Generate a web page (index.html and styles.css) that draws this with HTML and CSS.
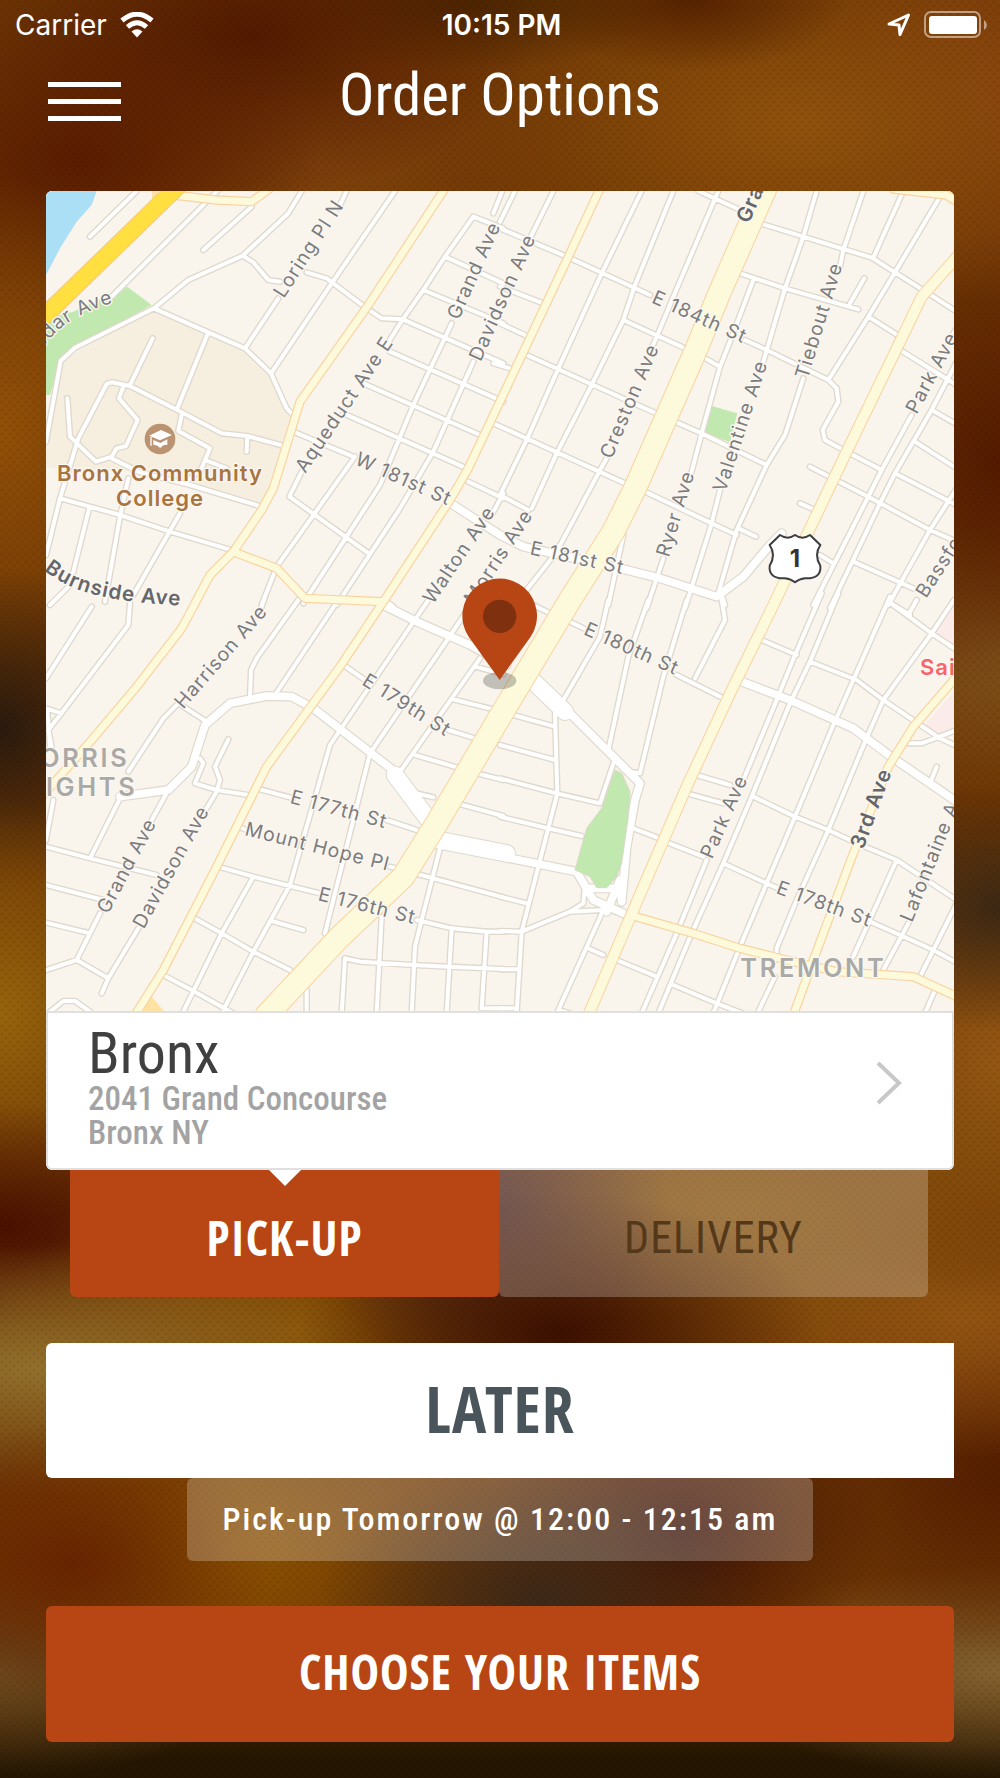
FILE: index.html
```html
<!DOCTYPE html>
<html lang="en">
<head>
<meta charset="utf-8">
<meta name="viewport" content="width=device-width, initial-scale=1">
<title>Order Options</title>
<link rel="stylesheet" href="styles.css">
</head>
<body>
<div class="status">
  <div class="status-side">
    <span>Carrier</span>
    <svg class="wifi" viewBox="0 0 34 26" aria-hidden="true">
      <path d="M2 8.500Q17-4 32 8.500" stroke-width="5"/>
      <path d="M7.500 15Q17 6.500 26.500 15" stroke-width="5"/>
      <path class="solid" d="M11.500 19.500Q17 15 22.500 19.500L17 25.500Z"/>
    </svg>
  </div>
  <span class="clock">10:15 PM</span>
  <div class="status-side status-right">
    <svg class="locate" viewBox="0 0 24 24" aria-hidden="true"><path d="M21.500 2 13 21.500 12 12 2 11Z"/></svg>
    <svg class="battery" viewBox="0 0 64 28" aria-hidden="true">
      <rect class="shell" x="1" y="1" width="55" height="25" rx="6"/>
      <rect x="5" y="5" width="48" height="18" rx="3"/>
      <path class="cap" d="M60 9Q63 11 63 14T60 19Z"/>
    </svg>
  </div>
</div>

<header class="bar">
  <button class="menu" type="button" aria-label="Menu"><i></i><i></i><i></i></button>
  <h1>Order Options</h1>
</header>

<main>
  <section class="card">
    <svg class="map" viewBox="18 18 2724 2460" role="img" aria-label="Map of the Bronx">
      <defs>
        <g id="streets">
          <path d="M150 155 290 18M490 195 635 65M215 335 500 50 540 10M785 18 745 85 608 212 445 285 342 370 105 488 62 528 18 770M608 212 640 232 685 285 720 290M920 18 895 70M715 340 615 490M342 370 505 442 615 490 693 565 740 670 760 690M1065 18 875 295 693 565M800 262 860 280 980 370 1025 400 1088 403 1390 535M1390 10 1360 85M1300 95 1215 215 1150 315 1088 403 1040 480M785 860 748 935 990 1108M1300 95 1390 130M1215 215 1390 295M1150 315 1390 415M1050 500 1390 650M970 595 1320 750M910 685 1280 850M765 742 940 815M1235 415 1120 660 1020 900 790 1255M1300 530 1180 800 1080 970 890 1260M945 815 710 1145 665 1260M338 460 270 600M505 442 412 670M82 640 90 755 168 830 215 815 230 790 258 783 293 705 237 640 250 605M18 1110 60 940 115 760 200 597 215 592 270 603 412 675 545 745 622 753 740 785M622 753 620 800M425 690 415 738 510 790 485 850 440 890M495 825 560 850M215 820 300 862 450 900 665 965M60 940 240 990 390 1040 580 1097M148 968 90 1200 30 1260M265 880 240 995 195 1250M420 985 280 1230M1285 890 1390 940M1390 925 1355 990M1040 1250 1060 1265"/>
          <path transform="translate(1380)" d="M45 18 0 110M160 18 85 170M0 130 200 215 450 330M735 465 800 495 985 585 1010 610 1015 650 968 735 975 765 1040 800 1145 855M0 305 130 355M0 415 85 455M-20 535 40 553M425 18 305 265 175 550 80 765 0 930 85 975M520 18 405 300 370 405 275 600 170 805 95 970M655 18 535 300 470 455 455 490M320 820 295 865 170 1100 80 1215M595 18 720 75M370 405 555 490M80 510 475 688M-20 715 375 895M435 920 635 1015 710 1050M715 1030 768 1055M615 520 660 545M530 712 605 745 800 840M790 118 910 155 1115 218 1185 262 1300 335 1370 380M720 265 855 310 1075 373M1093 280 1050 355M760 285 690 470 660 545 605 745 575 860M950 18 910 155 855 310 790 530M1090 18 1030 195 1020 245M910 580 855 750 800 840 710 1035 655 1225M1210 18 1120 218M1320 35 1185 262 1105 395 985 585M1105 395 1200 455M1205 498 1370 600M490 1120 440 1270M660 915 635 1015 555 1270M930 845 1105 935 1290 1035 1370 1070M900 955 945 975M1235 690 1145 855 1105 935 940 1260M1370 530 1295 675 1185 865 1140 955 990 1270M1370 430 1350 460M1295 675 1370 718M1245 770 1370 850M1185 865 1370 960M1370 910 1290 1035 1165 1260M1060 1130 1240 1210M960 1110 1000 1135M370 1050 325 1260M665 1230 675 1260M1165 1250 1230 1290"/>
          <path transform="translate(0 1245)" d="M155 20 18 235M270 10 265 75 60 345 25 390 35 440M18 325 65 340M22 330 30 440M675-10 665 20M415 310 370 355 265 515M430 320 500 365M775 0 650 175 633 210 630 290M895 0 705 285M1165 0 870 435 750 855 640 1055 545 1240M1275 40 1225 115 990 460 855 1000 875 1015M1320 175 1080 515M910 195 975 240M1225 390 1305 415M1235 297 1360 328M1305 200 1390 222M1125 465 1260 505M1310 520 1390 540M1130 580 1180 592M1250 610 1390 648M565 418 525 500 540 540 530 575 500 625M480 475 490 490 465 550 530 570 625 585M660 568 760 595M1040 660 1130 690M240 595 150 775M385 570 330 670M18 740 150 775 350 825M18 855 190 900M18 968 150 1000 110 1080 18 1110M180 940 150 1000M110 1080 205 1135M295 985 205 1135 185 1180M18 1245 70 1203 105 1203 150 1235M40 600 18 720M535 800 640 830 750 858 840 880M640 830 545 1000 425 1245M455 950 545 1000 640 1055 750 1110 760 1125M695 963 790 990M360 1120 455 1170 580 1240M595 680 620 690M1050 800 1180 835 1390 892M1200 745 1145 960 1125 1040 1115 1240M1130 960 1235 985 1340 995 1390 995M915 1075 960 1085 1120 1095 1225 1100 1390 1107M915 1075 905 1240M1025 950 1010 1240M1235 985 1220 1240M1340 995 1325 1225 1390 1225M800 1170 800 1240"/>
          <path transform="translate(1380 1245)" d="M100 15 150 40M325 0 300 110 190 300M445 0 385 170 325 450M560 0 490 230 420 520 385 515M340 490 300 610 170 580 0 535M665 0 675 60 585 235M210 65 250 85M530 225 670 295M40 345 165 380M165 340 172 580 115 800 65 995 50 1240M0 435 165 480M0 650 145 685 245 708M0 890 80 910M0 993 65 995 210 935 310 930M0 1108 55 1108M0 1225 50 1225M255 850 250 910 210 935M310 930 175 1230 210 1240M265 1045 310 1065M350 1080 470 1130M400 685 470 712M495 725 610 770M965-20 885 165 830 300 730 540M620 780 530 1000 425 1240M1015-20 930 185 870 310 755 590 670 790 575 1000 475 1240M785 120 890 165M930 185 1070 240 1150 300 1320 415 1370 438M590 525 690 555M560 580 670 610M760 590 885 650 985 690 1060 725M1095 740 1190 780 1370 900M670 790 800 850 835 865M1110 965 1200 1005 1300 1050 1370 1088M1170-10 1060 240 1000 375 885 650 800 850 720 1040 640 1240M1165 5 1220 45 1295 100 1370 150M1250 0 1225 45M1362 0 1295 100 1150 300 1095 425 985 690 890 900 830 1045 830 1070M825 1130 770 1245M1225 430 1265 430 1370 390M1310 500 1290 550M1190 780 1060 1070M1225 970 1150 1110M1370 910 1260 1130M1305 1170 1275 1240M520 1155 650 1210 740 1245"/>
        </g>
        <g id="avenues">
          <path d="M1232 955 1380 1050 1450 1085 1760 1155 1860 1180 2030 1235 2110 1175 2190 1080 2225 1045M1030 1260 1130 1310 1290 1380 1400 1440M240 1835 385 1815 455 1745 495 1620 570 1555 680 1533 755 1535 820 1570 1065 1760"/>
          <path d="M2105 1490 2250 1545 2440 1630 2560 1720 2750 1850M1580 1575 1800 1795 1785 1845 1760 1985 1745 2150M1360 2000 1410 2020 1610 2060 1660 2145 1750 2185M1700 2180 1740 2085 1745 2150M1640 2110 1740 2110"/>
        </g>
        <path id="boulevards" d="M1065 1770 1185 1930M1195 1965 1400 2005M1470 1480 1575 1580"/>
        <path id="yellow" d="M1215 10 985 360 780 650 740 780 700 910 665 975 580 1100 510 1170 425 1330 290 1505 155 1665 10 1830M580 1100 710 1150 795 1240 1030 1250 1230 945 1285 850 1460 480 1585 215 1685 0M1030 1250 900 1445 680 1745 530 2045 370 2355 285 2490M400 30 530 45 635 50 690 10M1770 2190 1960 2245 2100 2290 2260 2330 2390 2360 2620 2375 2750 2435M2750 1475 2620 1625 2545 1745 2440 2005 2320 2325 2260 2490M2560 12 2720 30 2750 50"/>
        <path id="webster" d="M2760 205 2645 335 2580 470 2420 800 2310 1030 2200 1260 2070 1525 1940 1805 1810 2105 1645 2490"/>
        <path id="concourse" d="M2190-20 2040 320 1970 490 1785 910 1720 1040 1590 1245 1380 1595 1190 1915 1090 2075 900 2255 680 2490"/>
        <path id="burnside" d="M12 1155C110 1235 230 1250 450 1264"/>
        <path id="cedar" d="M-30 580C10 440 90 395 222 352"/>
      </defs>

      <rect class="land" x="18" y="18" width="2724" height="2460"/>
      <path class="campus" d="M342 370 505 442 615 490 693 565 740 670 755 690 740 780 665 960 450 900 300 862 18 848V760L62 528Z"/>
      <path class="water" d="M18 18H170L155 60 110 110 60 190 18 270Z"/>
      <path class="park" d="M18 630V400L100 380 262 305 335 360 105 488 62 528 30 630ZM2015 663 2092 685 2070 772 1992 742Z"/>
      <path class="hospital" d="M2742 1265 2670 1350 2742 1400ZM2742 1520V1635L2700 1655 2655 1620Z"/>

      <use href="#streets" class="case minor"/>
      <use href="#avenues" class="case mid"/>
      <use href="#boulevards" class="case wide"/>
      <use href="#streets" class="fill minor"/>
      <use href="#avenues" class="fill mid"/>
      <use href="#boulevards" class="fill wide"/>
      <path class="park edge" d="M1725 1755 1745 1765 1770 1820 1765 1895 1745 2035 1730 2075 1700 2108H1670L1650 2075 1605 2055 1640 1930 1685 1870Z"/>
      <path class="ramp" d="M330 2430 372 2478H285Z"/>
      <path class="link" d="M345 10V50M140 270 120 300"/>
      <use href="#yellow" class="case-y thin"/>
      <use href="#webster" class="case-y web"/>
      <use href="#concourse" class="case-y conc"/>
      <use href="#yellow" class="fill-y thin"/>
      <use href="#webster" class="fill-y web"/>
      <use href="#concourse" class="fill-y conc"/>
      <path class="highway-case" d="M428-10-20 425"/>
      <path class="highway" d="M428-10-20 425"/>

      <g class="label">
        <text transform="translate(731 342) rotate(-57)">Loring Pl N</text>
        <text transform="translate(1256 407) rotate(-66)">Grand Ave</text>
        <text transform="translate(1322 532) rotate(-66)">Davidson Ave</text>
        <text transform="translate(796 867) rotate(-56)">Aqueduct Ave E</text>
        <text transform="translate(942 837) rotate(24)">W 181st St</text>
        <text transform="translate(1179 1260) rotate(-56)">Walton Ave</text>
        <text transform="translate(1480 990) rotate(-57)" text-anchor="end">Morris Ave</text>
        <text transform="translate(1832 352) rotate(24)">E 184th St</text>
        <text transform="translate(1715 824) rotate(-67)">Creston Ave</text>
        <text transform="translate(2056 924) rotate(-72)">Valentine Ave</text>
        <text transform="translate(2303 584) rotate(-73)">Tiebout Ave</text>
        <text transform="translate(1886 1119) rotate(-73)">Ryer Ave</text>
        <text transform="translate(2630 690) rotate(-62)">Park Ave</text>
        <text transform="translate(2658 1242) rotate(-57)">Bassfo</text>
        <text transform="translate(1468 1108) rotate(12)">E 181st St</text>
        <text transform="translate(430 1574) rotate(-49)">Harrison Ave</text>
        <text transform="translate(963 1497) rotate(32)">E 179th St</text>
        <text transform="translate(748 1853) rotate(15)">E 177th St</text>
        <text transform="translate(612 1950) rotate(14)">Mount Hope Pl</text>
        <text transform="translate(832 2145) rotate(14)">E 176th St</text>
        <text transform="translate(204 2189) rotate(-62)">Grand Ave</text>
        <text transform="translate(311 2234) rotate(-61)">Davidson Ave</text>
        <text transform="translate(1628 1347) rotate(24)">E 180th St</text>
        <text transform="translate(2016 2024) rotate(-66)">Park Ave</text>
        <text transform="translate(2206 2124) rotate(20)">E 178th St</text>
        <text transform="translate(2616 2214) rotate(-68)">Lafontaine A</text>
        <text text-anchor="end"><textPath href="#cedar" startOffset="100%">Cedar Ave</textPath></text>
      </g>
      <g class="label strong">
        <text transform="translate(2126 118) rotate(-66)">Gra</text>
        <text transform="translate(2470 1995) rotate(-70)">3rd Ave</text>
        <text><textPath href="#burnside">Burnside Ave</textPath></text>
      </g>
      <g class="label area">
        <text x="268" y="1745" text-anchor="end">ORRIS</text>
        <text x="292" y="1833" text-anchor="end">IGHTS</text>
        <text x="2320" y="2375" text-anchor="middle">TREMONT</text>
      </g>
      <text class="label hosp" x="2640" y="1471">Sai</text>
      <g class="label college" text-anchor="middle">
        <text x="360" y="888">Bronx Community</text>
        <text x="360" y="962">College</text>
      </g>
      <circle cx="360" cy="762" r="46" fill="#bb9370"/>
      <path fill="#fff" d="M327 752 363 735 396 750 360 766ZM340 765 361 774 382 763V780Q371 776 361 789 351 779 340 779ZM331 756H335V782H331Z"/>

      <path class="shield" d="M-45-70Q-22-54 0-70 22-54 45-70L76-40Q56-10 76 22 80 62 30 60 12 62 0 72-12 62-30 60-80 62-76 22-56-10-76-40Z" transform="translate(2265 1120)"/>
      <text class="route" x="2265" y="1145" text-anchor="middle">1</text>

      <ellipse cx="1379" cy="1487" rx="50" ry="26" fill="#000" fill-opacity=".22"/>
      <path fill="#b84614" d="M1379 1485 1286 1355A112 112 0 1 1 1472 1355Z"/>
      <circle cx="1379" cy="1294" r="50" fill="#7f300f"/>
    </svg>
    <a class="place" href="#store">
      <span class="place-text">
        <strong>Bronx</strong>
        <span>2041 Grand Concourse</span>
        <span>Bronx NY</span>
      </span>
      <svg class="chevron" viewBox="0 0 26 44" aria-hidden="true"><path d="M2 2 23 22 2 42"/></svg>
    </a>
  </section>

  <div class="tabs">
    <button class="tab active" type="button">PICK-UP</button>
    <button class="tab" type="button">DELIVERY</button>
  </div>

  <button class="later" type="button">LATER</button>
  <p class="slot">Pick-up Tomorrow @ 12:00 - 12:15 am</p>
  <button class="choose" type="button">CHOOSE YOUR ITEMS</button>
</main>
</body>
</html>
```
FILE: styles.css
```css
* { box-sizing: border-box; }

html {
  background-color: #6e3604;
  background-image:
    radial-gradient(22% 8% at 54% 90%, #3c2818, transparent),
    radial-gradient(20% 9% at 68% 86%, #3c1004, transparent),
    radial-gradient(26% 8% at 56% 75%, #3c1000, transparent),
    radial-gradient(18% 10% at 49% 68%, #4a2420, transparent),
    radial-gradient(50% 11% at 74% 68%, #86520c, transparent),
    radial-gradient(20% 8% at 7% 88%, #682400, transparent),
    radial-gradient(26% 10% at 23% 87%, #8c5200, transparent),
    radial-gradient(36% 7% at 4% 77%, #92702c, transparent),
    radial-gradient(32% 8% at 30% 75%, #8a5204, transparent),
    radial-gradient(24% 7% at 0% 69%, #4a1000, transparent),
    radial-gradient(20% 12% at 0% 57%, #96640c, transparent),
    radial-gradient(18% 9% at 0% 41%, #2a1a0e, transparent),
    radial-gradient(20% 14% at 0% 24%, #925008, transparent),
    radial-gradient(24% 9% at 8% 9%, #5a1c00, transparent),
    radial-gradient(28% 9% at 25% 2%, #521a00, transparent),
    radial-gradient(20% 4% at 47% 0%, #4a2600, transparent),
    radial-gradient(16% 4% at 69% 0%, #562200, transparent),
    radial-gradient(24% 9% at 32% 9%, #80420c, transparent),
    radial-gradient(36% 11% at 80% 7%, #90520c, transparent),
    radial-gradient(20% 12% at 100% 5%, #843e0e, transparent),
    radial-gradient(18% 13% at 100% 26%, #541a00, transparent),
    radial-gradient(18% 8% at 100% 37%, #80521a, transparent),
    radial-gradient(18% 7% at 100% 51%, #3c2814, transparent),
    radial-gradient(20% 12% at 100% 60%, #965814, transparent),
    radial-gradient(18% 5% at 98% 68%, #6c2c00, transparent),
    radial-gradient(34% 8% at 96% 74%, #965414, transparent),
    radial-gradient(22% 10% at 100% 83%, #541e00, transparent),
    radial-gradient(30% 6% at 100% 94%, #846230, transparent),
    radial-gradient(26% 6% at 0% 94%, #6e4c20, transparent),
    linear-gradient(transparent 91%, #241602 99%);
}

body {
  margin: 0;
  min-height: 100vh;
  color: #fff;
  font-family: "Roboto Condensed", Roboto, sans-serif;
  background-image:
    radial-gradient(circle at 2px 2px, rgba(0, 0, 0, .07) 1px, transparent 2px),
    radial-gradient(circle at 6px 6px, rgba(0, 0, 0, .07) 1px, transparent 2px);
  background-size: 8px 8px;
}

button { border: 0; padding: 0; color: inherit; cursor: pointer; }

.status {
  display: grid;
  grid-template-columns: 1fr auto 1fr;
  align-items: center;
  height: 50px;
  padding: 0 12px 0 15px;
  font: 400 28px/1 Inter, sans-serif;
}
.status-side { display: flex; align-items: center; gap: 13px; }
.status-right { justify-content: flex-end; }
.clock { font-weight: 600; }
.wifi { width: 34px; height: 26px; fill: none; stroke: #fff; }
.wifi .solid { fill: #fff; stroke: none; }
.locate { width: 24px; height: 24px; fill: none; stroke: #fff; stroke-width: 3; stroke-linejoin: round; }
.battery { width: 64px; height: 28px; fill: #fff; }
.battery .shell { fill: none; stroke: #fff; stroke-opacity: .5; stroke-width: 2; }
.battery .cap { fill-opacity: .5; }

.bar {
  display: grid;
  grid-template-columns: 1fr auto 1fr;
  align-items: center;
  height: 141px;
  padding: 0 48px 38px;
}
.menu { width: 73px; display: grid; gap: 12px; background: none; }
.menu i { height: 5px; background: #fff; }
h1 { margin: 0 0 14px; font-size: 59px; line-height: 72px; font-weight: 400; }

main { display: flex; flex-direction: column; padding: 0 46px 36px; }

.card { border-radius: 6px; overflow: hidden; background: #fff; }
.map { display: block; width: 100%; }
.place {
  display: flex;
  align-items: center;
  justify-content: space-between;
  padding: 12px 50px 18px 40px;
  border: 2px solid #e0e0e0;
  border-radius: 0 0 6px 6px;
  color: #a3a3a3;
  text-decoration: none;
  font-size: 33px;
  line-height: 34px;
  font-weight: 500;
}
.place-text { display: grid; }
.place strong { color: #404040; font-size: 58px; line-height: 57px; font-weight: 400; }
.chevron { width: 26px; height: 44px; margin-bottom: 10px; fill: none; stroke: #c8c8c8; stroke-width: 4; }

.tabs { display: grid; grid-template-columns: 1fr 1fr; margin: 0 26px 46px 24px; }
.tab {
  height: 127px;
  padding-top: 8px;
  border-radius: 0 0 6px 6px;
  background: rgba(255, 255, 255, .23);
  color: #54381a;
  font: 400 44px/1 "Roboto Condensed", Roboto, sans-serif;
  letter-spacing: 1px;
}
.tab.active {
  position: relative;
  background: #b84614;
  color: #fff;
  font: 700 48px/1 "Open Sans Condensed", "Roboto Condensed", sans-serif;
}
.tab.active::before {
  content: "";
  position: absolute;
  top: 0;
  left: 50%;
  margin-left: -16px;
  border: 16px solid transparent;
  border-top-color: #fff;
  border-bottom: 0;
}

.later, .choose {
  height: 135px;
  padding-bottom: 4px;
  font: 700 48px/1 "Open Sans Condensed", "Roboto Condensed", sans-serif;
  letter-spacing: 1px;
}
.later { background: #fff; color: #4a545b; font-size: 64px; border-radius: 6px 0 0 6px; }
.slot {
  align-self: center;
  margin: 0 0 45px;
  padding: 0 36px;
  border-radius: 6px;
  background: rgba(255, 255, 255, .23);
  font-size: 32px;
  line-height: 83px;
  font-weight: 500;
  letter-spacing: 2px;
}
.choose { height: 136px; background: #b84614; border-radius: 6px; }

/* Map */
.map path, .map use { stroke-linejoin: round; stroke-linecap: round; }
.land { fill: #f9f4ec; }
.campus { fill: #f6efdf; }
.water { fill: #abdff5; }
.park { fill: #c1e8af; }
.edge { stroke: #dcd8c8; stroke-width: 3; }
.hospital { fill: #fbecea; }
.ramp { fill: #ffe2a2; }
.link { fill: none; stroke: #ffe2a2; stroke-width: 18; }
.case, .fill, .case-y, .fill-y, .highway, .highway-case { fill: none; }
.case { stroke: #dfd8cd; }
.fill { stroke: #fff; }
.case-y { stroke: #f9d3a0; }
.fill-y { stroke: #fcfada; }
.case.minor { stroke-width: 20; }
.fill.minor { stroke-width: 12; }
.case.mid { stroke-width: 30; }
.fill.mid { stroke-width: 23; }
.case.wide { stroke-width: 56; }
.fill.wide { stroke-width: 50; }
.case-y.thin { stroke-width: 28; }
.fill-y.thin { stroke-width: 21; }
.case-y.web { stroke-width: 36; }
.fill-y.web { stroke-width: 30; }
.case-y.conc { stroke-width: 72; }
.fill-y.conc { stroke-width: 66; }
.highway-case { stroke: #f5c77e; stroke-width: 54; }
.highway { stroke: #ffe040; stroke-width: 48; }

.label {
  fill: #7b7c7e;
  stroke: #fbf7f1;
  stroke-width: 8px;
  stroke-linejoin: round;
  paint-order: stroke;
  font: 400 58px Inter, sans-serif;
  letter-spacing: 3px;
}
.label.strong { fill: #65666a; font-size: 62px; font-weight: 600; }
.label.area { fill: #aaa9a6; font-size: 76px; font-weight: 600; letter-spacing: 8px; }
.label.college { fill: #a8743f; font-size: 66px; font-weight: 600; }
.label.hosp { fill: #f5656b; font-size: 66px; font-weight: 600; }
.shield { fill: #fff; stroke: #3c3e42; stroke-width: 6; }
.route { fill: #333; font: 700 72px Inter, sans-serif; }
```
